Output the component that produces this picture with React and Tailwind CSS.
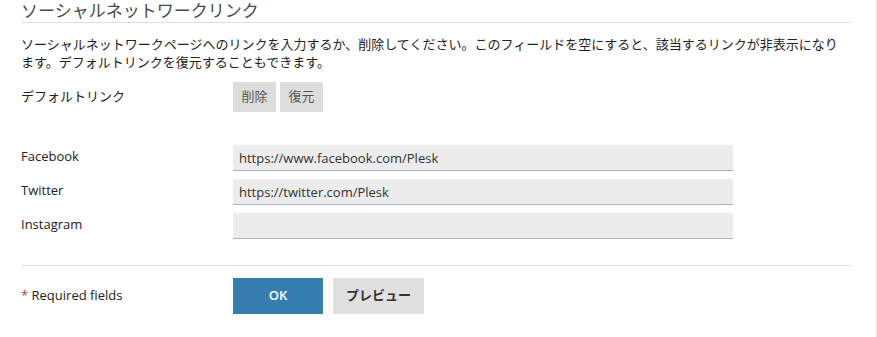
import React from 'react';

const FIELDS = [
    { label: 'Facebook', value: 'https://www.facebook.com/Plesk' },
    { label: 'Twitter', value: 'https://twitter.com/Plesk' },
    { label: 'Instagram', value: '' },
];

const font = { fontFamily: '"Open Sans", "Noto Sans CJK JP", sans-serif' };

export default function App() {
    return (
        <div className="w-[877px] h-[337px] bg-white border-r border-[#e4e4e4] overflow-hidden text-[#333]" style={font}>
            <div className="ml-[21px] w-[831px]">
                <h2 className="text-[17px] leading-[22px] text-[#4a4a4a] font-normal border-b border-[#dedede]">ソーシャルネットワークリンク</h2>

                <p className="mt-[12px] text-[13px] leading-[18px] text-[#222] whitespace-nowrap">
                    ソーシャルネットワークページへのリンクを入力するか、削除してください。このフィールドを空にすると、該当するリンクが非表示になり<br />ます。デフォルトリンクを復元することもできます。
                </p>

                <div className="mt-[11px] flex items-center">
                    <div className="w-[212px] text-[13px] text-[#222]">デフォルトリンク</div>
                    <div className="flex gap-[4px]">
                        <button className="w-[43px] h-[30px] bg-[#dddddd] text-[13px] text-[#555]">削除</button>
                        <button className="w-[43px] h-[30px] bg-[#dddddd] text-[13px] text-[#555]">復元</button>
                    </div>
                </div>

                <div className="mt-[33px] flex flex-col gap-[8px]">
                    {FIELDS.map(f => (
                        <div key={f.label} className="flex items-center">
                            <div className="w-[212px] text-[13px] text-[#222] -mt-[2px]">{f.label}</div>
                            <input
                                type="text"
                                defaultValue={f.value}
                                className="w-[500px] h-[26px] bg-[#ececec] border-b border-[#a9b4be] px-[6px] text-[13px] text-[#333] outline-none"
                                style={font}
                            />
                        </div>
                    ))}
                </div>

                <div className="mt-[26px] border-t border-[#dedede]" />

                <div className="mt-[12px] flex items-center">
                    <div className="w-[212px] text-[13px] text-[#222]">
                        <span className="text-[#c0392b]">*</span> Required fields
                    </div>
                    <div className="flex gap-[10px]">
                        <button className="w-[90px] h-[36px] bg-[#357eaf] text-white text-[13px] font-semibold">OK</button>
                        <button className="w-[91px] h-[36px] bg-[#e0e0e0] text-[#333] text-[13px] font-semibold">プレビュー</button>
                    </div>
                </div>
            </div>
        </div>
    );
}
